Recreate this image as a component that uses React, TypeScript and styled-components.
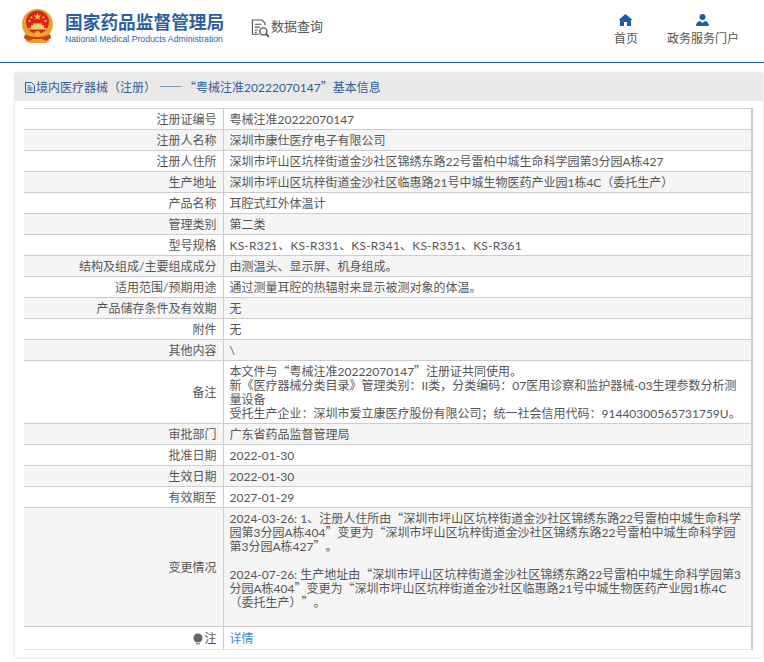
import React from "react";
import styled, { createGlobalStyle } from "styled-components";

const Global = createGlobalStyle`
  html, body { margin: 0; padding: 0; background: #fff; }
  body { font-family: "Lato", "Noto Sans CJK SC", "Liberation Sans", sans-serif; font-size: 12px; color: #555; text-spacing-trim: space-all; }
`;
const Page = styled.div`width: 764px; height: 662px; overflow: hidden; background: #fff;`;
const Header = styled.header`
  height: 62px; border-bottom: 1px solid #1f5fa8; display: flex; align-items: flex-start;
`;
const Brand = styled.div`display: flex; margin: 8px 0 0 21px; gap: 11px; width: 230px; flex: none;`;
const BrandText = styled.div`display: flex; flex-direction: column; padding-top: 2px;`;
const BrandCn = styled.div`
  font-family: "Noto Sans CJK SC", sans-serif; font-size: 17.7px; line-height: 22px; font-weight: 700; color: #2b5f9e; white-space: nowrap;
`;
const BrandEn = styled.div`
  font-family: "Liberation Sans", sans-serif; font-size: 8.7px; line-height: 12px; color: #2b5f9e; white-space: nowrap; margin-top: 1px;
`;
const Query = styled.div`
  display: flex; align-items: flex-start; margin: 16px 0 0 0; font-size: 13px; line-height: 20px; color: #555; white-space: nowrap;
  svg { margin-top: 2px; flex: none; }
`;
const Nav = styled.nav`display: flex; margin: 14px 0 0 auto; padding-right: 25px; gap: 29px;`;
const NavItem = styled.div`
  display: flex; flex-direction: column; align-items: center; gap: 5px; font-size: 12px; line-height: 16px; color: #555; white-space: nowrap;
  svg { display: block; }
`;
const Band = styled.div`
  height: 10px;
  background-color: #fff;
  background-image: radial-gradient(#e2e2e2 0.6px, transparent 0.7px);
  background-size: 2px 2px;
`;
const Panel = styled.section`
  margin: 0 1px 0 15px; height: 584px; background: #fff; box-shadow: 0 0 3px rgba(0,0,0,.18);
`;
const PanelTitle = styled.div`
  height: 28px; background: #e9e9e9; padding-left: 10px; color: #2c5f9e; font-size: 12px; display: flex; align-items: center; gap: 1px;
  svg { flex: none; }
`;
const TitleText = styled.span`white-space: pre; line-height: 14px; padding-top: 2px;`;
const Dash = styled.span`font-family: "Noto Sans CJK SC", sans-serif; line-height: 0; margin-right: 1px;`;
const Quote = styled.span`font-family: "Noto Sans CJK SC", sans-serif; line-height: 0; font-feature-settings: "fwid";`;
const Table = styled.table`
  margin: 7px 0 0 9px; width: 729px; table-layout: fixed; border-collapse: collapse; border-top: 1px solid #ccc; border-right: 2px solid #ccc;
`;
const Row = styled.tr<{ $shade: boolean }>`
  background: ${(p) => (p.$shade ? "#f5f5f5" : "#fff")};
  border-bottom: 1px solid #ccc;
  &:last-child { border-bottom-color: #e4e4e4; }
  &:last-child td { padding-top: 5px; padding-bottom: 3px; }
`;
const Label = styled.td<{ $h?: number }>`
  width: 199px; box-sizing: border-box; text-align: right; padding: 4px 6px 2px 0; line-height: 14px; height: ${(p) => p.$h ?? 20}px; border-right: 1px solid #ccc; color: #555;
  white-space: nowrap;
`;
const Value = styled.td<{ $wide?: boolean }>`
  padding: 4px 7px 2px 6px; line-height: 14px; color: #555; vertical-align: middle; word-break: break-all;
  letter-spacing: ${(p) => (p.$wide ? "0.2px" : "0")};
`;
const Para = styled.div``;
const Gap = styled.div`height: 14px;`;
const LinkText = styled.span`color: #3f8ad6;`;
const Bulb = styled.svg`vertical-align: -2px; margin-right: 1px;`;

function q(text: string) {
  return text.split(/([“”])/).map((part, i) =>
    part === "“" || part === "”" ? <Quote key={i}>{part}</Quote> : part
  );
}

function Emblem() {
  return (
    <svg width="33" height="36" viewBox="0 0 33 36" aria-hidden="true">
      <path d="M16.5 1C8 1 1 7.500 1 16c0 5 2 9 5.500 12l-2 5 4 2h16l4-2-2-5c3.500-3 5.500-7 5.500-12C32 7.500 25 1 16.500 1z" fill="#e3a32d" />
      <circle cx="16.500" cy="14" r="11.500" fill="#d8261c" />
      <path d="M16.500 5l1 2.600h2.700l-2.200 1.600.8 2.600-2.300-1.600-2.300 1.600.8-2.600-2.200-1.600h2.700z" fill="#f6d24a" />
      <circle cx="10.500" cy="9.500" r="1" fill="#f6d24a" />
      <circle cx="22.500" cy="9.500" r="1" fill="#f6d24a" />
      <circle cx="8.500" cy="13" r="1" fill="#f6d24a" />
      <circle cx="24.500" cy="13" r="1" fill="#f6d24a" />
      <path d="M8 20h17v1.500H8zM10 17.500h13V20H10zM12 15.500h9v2h-9z" fill="#f2cf6a" />
      <path d="M4 26c3 2 6 3 12.500 3S26 28 29 26l1 4-5 3-4-2h-9l-4 2-5-3z" fill="#cf3a1f" />
      <circle cx="16.500" cy="26" r="3" fill="#e9b13a" />
    </svg>
  );
}
function QueryIcon() {
  return (
    <svg width="20" height="22" viewBox="0 0 21 22" fill="none" stroke="#555" strokeWidth="1.200" aria-hidden="true">
      <path d="M8.500 16.500H1.500V1.500h10l3 3V7" />
      <path d="M4 6h7M4 9h5M4 12h3M4 14.500h2" />
      <circle cx="13" cy="13.500" r="3.700" strokeWidth="1.500" />
      <path d="M15.800 16.300l3.200 3" strokeWidth="2" />
    </svg>
  );
}
function DocIcon() {
  return (
    <svg width="10" height="11" viewBox="0 0 10 11" fill="none" stroke="#2c5f9e" strokeWidth="1" aria-hidden="true">
      <path d="M.500.500h6l3 3v7h-9z" />
      <path d="M2.500 4h3M2.500 6h5M2.500 8h5" />
    </svg>
  );
}
function HomeIcon() {
  return (
    <svg width="13" height="12" viewBox="0 0 13 12" fill="#1c5cb0" aria-hidden="true">
      <path d="M6.500 0L13 5.500l-1 1V12H8V8H5v4H1V6.500l-1-1z" />
    </svg>
  );
}
function UserIcon() {
  return (
    <svg width="13" height="12" viewBox="0 0 13 12" fill="#1c5cb0" aria-hidden="true">
      <circle cx="6.500" cy="3" r="3" />
      <path d="M0 12c.3-3 1.500-4.500 4-5l2.500 2L9 7c2.500.5 3.700 2 4 5z" />
    </svg>
  );
}

const rows: [string, string][] = [
  ["注册证编号", "粤械注准20222070147"],
  ["注册人名称", "深圳市康仕医疗电子有限公司"],
  ["注册人住所", "深圳市坪山区坑梓街道金沙社区锦绣东路22号雷柏中城生命科学园第3分园A栋427"],
  ["生产地址", "深圳市坪山区坑梓街道金沙社区临惠路21号中城生物医药产业园1栋4C（委托生产）"],
  ["产品名称", "耳腔式红外体温计"],
  ["管理类别", "第二类"],
  ["型号规格", "KS-R321、KS-R331、KS-R341、KS-R351、KS-R361"],
  ["结构及组成/主要组成成分", "由测温头、显示屏、机身组成。"],
  ["适用范围/预期用途", "通过测量耳腔的热辐射来显示被测对象的体温。"],
  ["产品储存条件及有效期", "无"],
  ["附件", "无"],
  ["其他内容", "\\"],
];
const after: [string, string][] = [
  ["审批部门", "广东省药品监督管理局"],
  ["批准日期", "2022-01-30"],
  ["生效日期", "2022-01-30"],
  ["有效期至", "2027-01-29"],
];

export default function App() {
  return (
    <Page lang="zh-CN">
      <Global />
      <Header>
        <Brand>
          <Emblem />
          <BrandText>
            <BrandCn>国家药品监督管理局</BrandCn>
            <BrandEn>National Medical Products Administration</BrandEn>
          </BrandText>
        </Brand>
        <Query>
          <QueryIcon />
          数据查询
        </Query>
        <Nav>
          <NavItem>
            <HomeIcon />
            首页
          </NavItem>
          <NavItem>
            <UserIcon />
            政务服务门户
          </NavItem>
        </Nav>
      </Header>
      <Band />
      <Panel>
        <PanelTitle>
          <DocIcon />
          <TitleText>
            境内医疗器械（注册） <Dash>——</Dash>
            {q("“粤械注准20222070147”基本信息")}
          </TitleText>
        </PanelTitle>
        <Table>
          <tbody>
            {rows.map(([k, v], i) => (
              <Row key={k} $shade={i % 2 === 1}>
                <Label>{k}</Label>
                <Value $wide={k === "型号规格"}>{v}</Value>
              </Row>
            ))}
            <Row $shade={false}>
              <Label>备注</Label>
              <Value>
                <Para>{q("本文件与“粤械注准20222070147”注册证共同使用。")}</Para>
                <Para>新《医疗器械分类目录》管理类别：II类，分类编码：07医用诊察和监护器械-03生理参数分析测量设备</Para>
                <Para>受托生产企业：深圳市爱立康医疗股份有限公司；统一社会信用代码：91440300565731759U。</Para>
              </Value>
            </Row>
            {after.map(([k, v], i) => (
              <Row key={k} $shade={i % 2 === 0}>
                <Label>{k}</Label>
                <Value>{v}</Value>
              </Row>
            ))}
            <Row $shade>
              <Label>变更情况</Label>
              <Value>
                <Para>{q("2024-03-26: 1、注册人住所由“深圳市坪山区坑梓街道金沙社区锦绣东路22号雷柏中城生命科学园第3分园A栋404”变更为“深圳市坪山区坑梓街道金沙社区锦绣东路22号雷柏中城生命科学园第3分园A栋427”。")}</Para>
                <Gap />
                <Para>{q("2024-07-26: 生产地址由“深圳市坪山区坑梓街道金沙社区锦绣东路22号雷柏中城生命科学园第3分园A栋404”变更为“深圳市坪山区坑梓街道金沙社区临惠路21号中城生物医药产业园1栋4C（委托生产）”。")}</Para>
                <Gap />
              </Value>
            </Row>
            <Row $shade={false}>
              <Label $h={22}>
                <Bulb width="10" height="12" viewBox="0 0 10 12" aria-hidden="true">
                  <circle cx="5" cy="5" r="4.500" fill="#666" />
                  <path d="M3 10h4v1.500H3z" fill="#999" />
                </Bulb>
                注
              </Label>
              <Value>
                <LinkText>详情</LinkText>
              </Value>
            </Row>
          </tbody>
        </Table>
      </Panel>
    </Page>
  );
}
